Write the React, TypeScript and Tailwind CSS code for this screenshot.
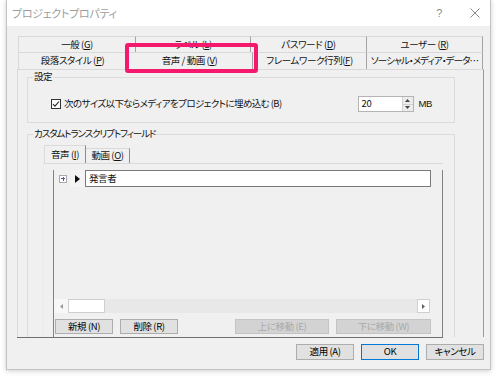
import type { ReactNode } from 'react'

const font = "font-['Noto_Sans_CJK_JP','Liberation_Sans',sans-serif] [font-feature-settings:'palt']"

function Mn({ children }: { children: ReactNode }) {
  return <span className="underline decoration-1 underline-offset-[1px]">{children}</span>
}

function Tab({ w, children }: { w: string; children: ReactNode }) {
  return (
    <div className={`flex h-full shrink-0 items-center justify-center border-t border-r border-t-[#d9d9d9] border-r-[#a3a3a3] ${w}`}>
      <span className="whitespace-nowrap">{children}</span>
    </div>
  )
}

function Btn({ w, children, variant = 'normal' }: { w: string; children: ReactNode; variant?: 'normal' | 'disabled' | 'focus' }) {
  const look =
    variant === 'disabled'
      ? 'border-[#c4c4c4] bg-[#d3d3d3] text-[#a9a9a9]'
      : variant === 'focus'
        ? 'border-[#0078d7] bg-[#e1e1e1] text-black'
        : 'border-[#adadad] bg-[#e1e1e1] text-black'
  return (
    <div className={`flex shrink-0 items-center justify-center border whitespace-nowrap ${w} ${look}`}>
      {children}
    </div>
  )
}

export default function App() {
  return (
    <div className={`relative h-[376px] w-[500px] overflow-hidden bg-white pl-[6px] text-[9.5px] leading-none tracking-[-0.4px] text-[#111] ${font}`}>
      {/* dialog window */}
      <div className="flex h-[370px] w-[485px] flex-col border-x border-b border-[#c3c3c3] bg-[#f0f0f0] shadow-[0_1px_5px_rgba(0,0,0,0.2)]">
        {/* title bar */}
        <div className="flex h-[26px] shrink-0 items-center bg-white pl-[5px] pr-[10px]">
          <span className="text-[11px] tracking-[-0.3px] text-[#9d9d9d]">プロジェクトプロパティ</span>
          <span className="ml-auto text-[11px] text-[#8a8a8a] [font-family:'Liberation_Sans',sans-serif]">?</span>
          <svg className="ml-[28px]" width="10" height="10" viewBox="0 0 10 10">
            <path d="M0.5 0.5 L9.5 9.5 M9.5 0.5 L0.5 9.5" stroke="#8a8a8a" strokeWidth="1" fill="none" />
          </svg>
        </div>

        {/* body */}
        <div className="pl-[10px] pt-[10px]">
          {/* tab rows */}
          <div className="ml-[1px] flex h-[16px] border-l border-[#d9d9d9]">
            <Tab w="w-[117px]">一般 (<Mn>G</Mn>)</Tab>
            <Tab w="w-[115px]">ラベル (<Mn>L</Mn>)</Tab>
            <Tab w="w-[116px]">パスワード (<Mn>D</Mn>)</Tab>
            <Tab w="w-[116px]">ユーザー (<Mn>R</Mn>)</Tab>
          </div>
          <div className="ml-[1px] flex h-[17px] border-l border-[#d9d9d9]">
            <Tab w="w-[108px]">段落スタイル (<Mn>P</Mn>)</Tab>
            <Tab w="w-[126px]">音声 / 動画 (<Mn>V</Mn>)</Tab>
            <Tab w="w-[114px]">フレームワーク行列(<Mn>F</Mn>)</Tab>
            <Tab w="w-[116px] tracking-[-0.9px]">ソーシャル・メディア・データ…</Tab>
          </div>

          {/* main tab page */}
          <div className="h-[268px] w-[467px] overflow-hidden border-t border-l border-r border-t-[#d9d9d9] border-l-[#dadada] border-r-[#9a9a9a] pl-[9px] pt-[7px]">
            {/* 設定 group */}
            <div className="relative h-[46px] w-[428px] border border-[#dcdcdc]">
              <span className="absolute left-[5px] top-[-6px] bg-[#f0f0f0] px-[1px]">設定</span>
              <div className="mt-[18px] flex h-[16px] items-center pl-[23px] pr-[22px]">
                <div className="flex h-[10px] w-[10px] items-center justify-center border border-[#333333] bg-white">
                  <svg width="8" height="8" viewBox="0 0 8 8">
                    <path d="M1 4.2 L3 6.2 L7 1.5" stroke="#222" strokeWidth="1.1" fill="none" />
                  </svg>
                </div>
                <span className="ml-[3px] tracking-[-0.6px]">次のサイズ以下ならメディアをプロジェクトに埋め込む (B)</span>
                <div className="ml-auto flex h-[16px] w-[56px] border border-[#b4b4b4] bg-white">
                  <span className="flex flex-1 items-center pl-[3px]">20</span>
                  <div className="flex w-[11px] flex-col border-l border-[#d0d0d0] bg-[#ececec]">
                    <div className="flex flex-1 items-center justify-center border-b border-[#d0d0d0]">
                      <svg width="5" height="3" viewBox="0 0 5 3"><path d="M0 3 L2.5 0 L5 3 Z" fill="#444" /></svg>
                    </div>
                    <div className="flex flex-1 items-center justify-center">
                      <svg width="5" height="3" viewBox="0 0 5 3"><path d="M0 0 L5 0 L2.5 3 Z" fill="#444" /></svg>
                    </div>
                  </div>
                </div>
                <span className="ml-[5px] [font-family:'Liberation_Sans',sans-serif]">MB</span>
              </div>
            </div>

            {/* カスタムトランスクリプトフィールド group */}
            <div className="relative mt-[11px] h-[210px] w-[428px] border-x border-t border-[#dcdcdc] pl-[15px] pt-[10px]">
              <span className="absolute left-[5px] top-[-6px] bg-[#f0f0f0] px-[1px] tracking-[-1.1px]">カスタムトランスクリプトフィールド</span>

              {/* inner tabs */}
              <div className="ml-[1px] flex h-[18px] items-end">
                <div className="flex h-[18px] w-[42px] items-center justify-center border-l border-t border-r border-l-[#dadada] border-t-[#dadada] border-r-[#8c8c8c]">
                  音声 (<Mn>I</Mn>)
                </div>
                <div className="flex h-[15px] w-[44px] items-center justify-center border-t border-r border-t-[#dadada] border-r-[#8c8c8c]">
                  動画 (<Mn>O</Mn>)
                </div>
              </div>

              {/* inner tab page */}
              <div className="h-[200px] w-[400px] border-t border-l border-t-[#dadada] border-l-[#ebebeb] pl-[9px]">
                <div className="h-[200px] w-[390px] border-x border-[#828282]">
                  {/* grid row */}
                  <div className="mt-[6px] flex h-[17px] items-center pl-[5px]">
                    <div className="relative h-[8px] w-[8px] border border-[#a9a9a9] bg-white">
                      <div className="absolute left-[1px] top-[2.5px] h-px w-[4px] bg-[#3f5fa8]" />
                      <div className="absolute left-[2.5px] top-[1px] h-[4px] w-px bg-[#3f5fa8]" />
                    </div>
                    <div className="ml-[3px] flex h-[17px] w-[15px] items-center justify-center bg-[#f4f4f4]">
                      <svg width="5" height="8" viewBox="0 0 5 8"><path d="M0 0 L5 4 L0 8 Z" fill="#111" /></svg>
                    </div>
                    <div className="flex h-[17px] w-[346px] items-center border border-[#7a7a7a] bg-white pl-[3px]">発言者</div>
                  </div>

                  {/* horizontal scrollbar */}
                  <div className="mt-[112px] flex h-[14px] w-[376px] bg-[#e8e8e8]">
                    <div className="flex w-[14px] items-center justify-center bg-[#f7f7f7]">
                      <svg width="3" height="5" viewBox="0 0 3 5"><path d="M3 0 L0 2.5 L3 5 Z" fill="#9a9a9a" /></svg>
                    </div>
                    <div className="w-[37px] border border-[#cfcfcf] bg-white" />
                    <div className="ml-auto flex w-[13px] items-center justify-center border border-[#cfcfcf] bg-white">
                      <svg width="3" height="5" viewBox="0 0 3 5"><path d="M0 0 L3 2.5 L0 5 Z" fill="#606060" /></svg>
                    </div>
                  </div>

                  {/* grid buttons */}
                  <div className="mt-[6px] flex h-[15px] pl-[1px]">
                    <Btn w="w-[58px]">新規 (N)</Btn>
                    <Btn w="ml-[7px] w-[58px]">削除 (R)</Btn>
                    <Btn w="ml-[57px] w-[94px]" variant="disabled">上に移動 (E)</Btn>
                    <Btn w="ml-[7px] w-[95px]" variant="disabled">下に移動 (W)</Btn>
                  </div>
                </div>
              </div>
            </div>
          </div>
          <div className="h-px w-[426px] bg-[#6f6f6f]" />

          {/* dialog buttons */}
          <div className="mt-[6px] flex h-[16px] justify-end gap-[7px] pr-[6px]">
            <Btn w="w-[58px]">適用 (A)</Btn>
            <Btn w="w-[58px]" variant="focus">OK</Btn>
            <Btn w="w-[58px]">キャンセル</Btn>
          </div>
        </div>
      </div>

      {/* pink highlight around the selected tab */}
      <div className="absolute left-[125px] top-[43px] h-[30px] w-[133px] rounded-[3px] border-[4px] border-[#f5196d]" />
    </div>
  )
}
